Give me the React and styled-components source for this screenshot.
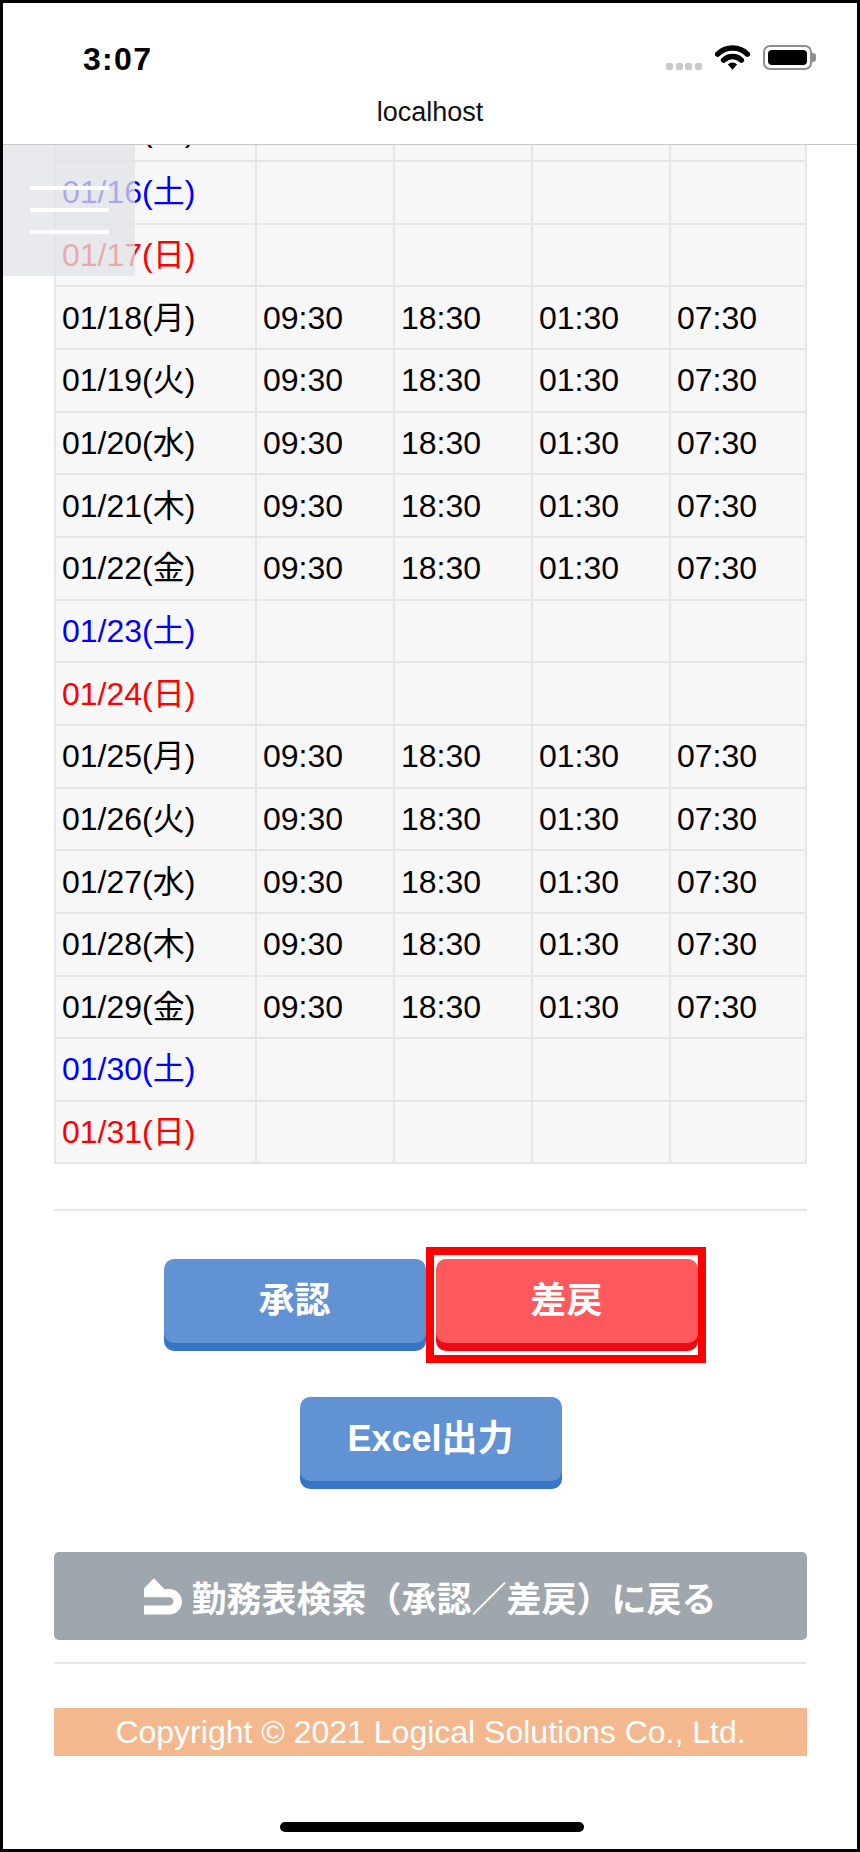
import React from "react";
import styled, { createGlobalStyle } from "styled-components";

const GlobalStyle = createGlobalStyle`
  html, body {
    margin: 0;
    padding: 0;
    background: #fff;
  }
  body {
    font-family: "Liberation Sans", "Noto Sans CJK JP", sans-serif;
  }
`;

const Frame = styled.div`
  position: relative;
  width: 860px;
  height: 1852px;
  box-sizing: border-box;
  border: 3px solid #000;
  background: #fff;
  display: flex;
  flex-direction: column;
  overflow: hidden;
`;

const Header = styled.header`
  flex: none;
  background: #fff;
  border-bottom: 1px solid #c8c8c8;
`;

const StatusBar = styled.div`
  height: 88px;
  box-sizing: border-box;
  padding: 40px 41px 0 80px;
  display: flex;
  align-items: flex-start;
  justify-content: space-between;
`;

const Clock = styled.span`
  font: 700 32px/32px "Liberation Sans", sans-serif;
  letter-spacing: 1.3px;
  color: #000;
`;

const Indicators = styled.div`
  height: 28px;
  display: flex;
  align-items: center;
`;

const Signal = styled.div`
  display: flex;
  gap: 2.5px;
  align-self: flex-end;
  margin: 0 13px 1px 0;
`;

const Dot = styled.span`
  width: 7px;
  height: 7px;
  border-radius: 2px;
  background: #c9c9c9;
`;

const Battery = styled.div`
  display: flex;
  align-items: center;
  margin-left: 12.7px;
`;

const BatteryBody = styled.div`
  width: 49px;
  height: 25px;
  box-sizing: border-box;
  border: 2px solid #8e8e8e;
  border-radius: 7px;
  padding: 3px;
`;

const BatteryLevel = styled.div`
  height: 100%;
  background: #000;
  border-radius: 4px;
`;

const BatteryCap = styled.span`
  width: 4px;
  height: 9px;
  margin-left: 0.5px;
  background: #8e8e8e;
  border-radius: 0 3px 3px 0;
`;

const UrlBar = styled.div`
  height: 53px;
  box-sizing: border-box;
  padding-top: 6px;
  text-align: center;
  font: 400 27px/31px "Liberation Sans", sans-serif;
  color: #111;
`;

const Viewport = styled.main`
  position: relative;
  flex: 1;
  overflow: hidden;
`;

// page is scrolled: the 01/15 row sits mostly under the header
const Content = styled.div`
  margin-top: -47.7px;
  padding: 0 50px 0 51px;
  display: flex;
  flex-direction: column;
`;

const Sheet = styled.div`
  display: grid;
  grid-template-columns: 201px 138px 138px 138px 1fr;
  border-top: 2px solid #e6e6e6;
  border-left: 2px solid #e6e6e6;
  background: #f7f7f7;
`;

const toneColor = {
  sat: "#0000ff",
  sun: "#ff0000",
  day: "#000",
};

const Cell = styled.div`
  height: 62.66px;
  box-sizing: border-box;
  border-right: 2px solid #e6e6e6;
  border-bottom: 2px solid #e6e6e6;
  display: flex;
  align-items: center;
  padding-left: 6px;
  font: 400 32px/32px "Liberation Sans", "Noto Sans CJK JP", sans-serif;
  color: ${(p) => toneColor[p.$tone] || "#000"};
  white-space: nowrap;
`;

const Rule = styled.hr`
  margin: ${(p) => p.$top}px 0 0;
  border: 0;
  height: 2px;
  background: #e6e6e6;
`;

const ActionRow = styled.div`
  display: flex;
  justify-content: center;
  gap: 10px;
  margin-top: ${(p) => p.$top}px;
`;

const ActionButton = styled.button`
  width: 262px;
  height: 84px;
  padding: 0;
  border: 0;
  border-radius: 10px;
  background: ${(p) => (p.$variant === "danger" ? "#ff585d" : "#6192d3")};
  box-shadow: 0 8px 0 ${(p) => (p.$variant === "danger" ? "#ee0a14" : "#3775c7")};
  color: #fff;
  font: 700 36px/1 "Liberation Sans", "Noto Sans CJK JP", sans-serif;
  display: flex;
  align-items: center;
  justify-content: center;
`;

const Highlight = styled.div`
  position: relative;

  &::after {
    content: "";
    position: absolute;
    top: -12px;
    bottom: -20px;
    left: -10px;
    right: -8px;
    border: 8px solid #ff0000;
    pointer-events: none;
  }
`;

const BackButton = styled.button`
  width: 100%;
  height: 87.7px;
  margin-top: 71.3px;
  padding: 0;
  border: 0;
  border-radius: 5px;
  background: #9ea6ae;
  color: #fff;
  display: flex;
  align-items: center;
  justify-content: center;
  gap: 9px;
  font: 700 35px/1 "Noto Sans CJK JP", sans-serif;
`;

const Copyright = styled.footer`
  margin-top: 44px;
  height: 48px;
  background: #f4b88e;
  color: #fff;
  display: flex;
  align-items: center;
  justify-content: center;
  font: 400 32px/1 "Liberation Sans", sans-serif;
`;

const MenuToggle = styled.div`
  position: absolute;
  top: 0;
  left: 0;
  width: 132px;
  height: 131px;
  box-sizing: border-box;
  padding: 41px 0 0 27px;
  background: rgba(225, 227, 231, 0.74);
  display: flex;
  flex-direction: column;
  gap: 18px;
`;

const MenuLine = styled.span`
  width: 79px;
  height: 4px;
  background: #fff;
`;

const HomeIndicator = styled.div`
  position: absolute;
  left: 277px;
  bottom: 17px;
  width: 304px;
  height: 10px;
  border-radius: 5px;
  background: #000;
`;

const WEEK = ["日", "月", "火", "水", "木", "金", "土"];
const WORK = ["09:30", "18:30", "01:30", "07:30"];
const EMPTY = ["", "", "", ""];

const days = Array.from({ length: 17 }, (_, i) => {
  const date = new Date(2021, 0, 15 + i);
  const wd = date.getDay();
  const dd = String(date.getDate()).padStart(2, "0");
  const off = wd === 0 || wd === 6;
  return {
    label: `01/${dd}(${WEEK[wd]})`,
    tone: wd === 6 ? "sat" : wd === 0 ? "sun" : "day",
    // first row is scrolled out of view, its times are not shown
    times: off || i === 0 ? EMPTY : WORK,
  };
});

const Wifi = () => (
  <svg width="35" height="27" viewBox="0 0 35 27">
    <path
      d="M2.65 10.15 A21 21 0 0 1 32.35 10.15"
      fill="none"
      stroke="#000"
      strokeWidth="5.5"
      strokeLinecap="round"
    />
    <path
      d="M8.66 16.16 A12.5 12.5 0 0 1 26.34 16.16"
      fill="none"
      stroke="#000"
      strokeWidth="5.5"
      strokeLinecap="round"
    />
    <path d="M17.5 25.8 L12.9 20.4 A6.5 6.5 0 0 1 22.1 20.4 Z" fill="#000" />
  </svg>
);

const ReturnIcon = () => (
  <svg width="38" height="37" viewBox="0 0 38.5 37" fill="#fff">
    <path d="M10 0 L20.5 11 L-0.5 11 Z" />
    <path d="M0 11 H25.6 A12.85 12.85 0 0 1 25.6 36.7 H0 V27.7 H25.6 A4.2 4.2 0 0 0 25.6 19.3 H0 Z" />
  </svg>
);

const App = () => {
  return (
    <Frame>
      <GlobalStyle />
      <Header>
        <StatusBar>
          <Clock>3:07</Clock>
          <Indicators>
            <Signal>
              <Dot />
              <Dot />
              <Dot />
              <Dot />
            </Signal>
            <Wifi />
            <Battery>
              <BatteryBody>
                <BatteryLevel />
              </BatteryBody>
              <BatteryCap />
            </Battery>
          </Indicators>
        </StatusBar>
        <UrlBar>localhost</UrlBar>
      </Header>
      <Viewport>
        <Content>
          <Sheet>
            {days.map((d) => (
              <React.Fragment key={d.label}>
                <Cell $tone={d.tone}>{d.label}</Cell>
                {d.times.map((t, i) => (
                  <Cell key={i}>{t}</Cell>
                ))}
              </React.Fragment>
            ))}
          </Sheet>
          <Rule $top={44.8} />
          <ActionRow $top={47.7}>
            <ActionButton>承認</ActionButton>
            <Highlight>
              <ActionButton $variant="danger">差戻</ActionButton>
            </Highlight>
          </ActionRow>
          <ActionRow $top={54}>
            <ActionButton>Excel出力</ActionButton>
          </ActionRow>
          <BackButton>
            <ReturnIcon />
            勤務表検索（承認／差戻）に戻る
          </BackButton>
          <Rule $top={22} />
          <Copyright>Copyright © 2021 Logical Solutions Co., Ltd.</Copyright>
        </Content>
        <MenuToggle>
          <MenuLine />
          <MenuLine />
          <MenuLine />
        </MenuToggle>
      </Viewport>
      <HomeIndicator />
    </Frame>
  );
};

export default App;
